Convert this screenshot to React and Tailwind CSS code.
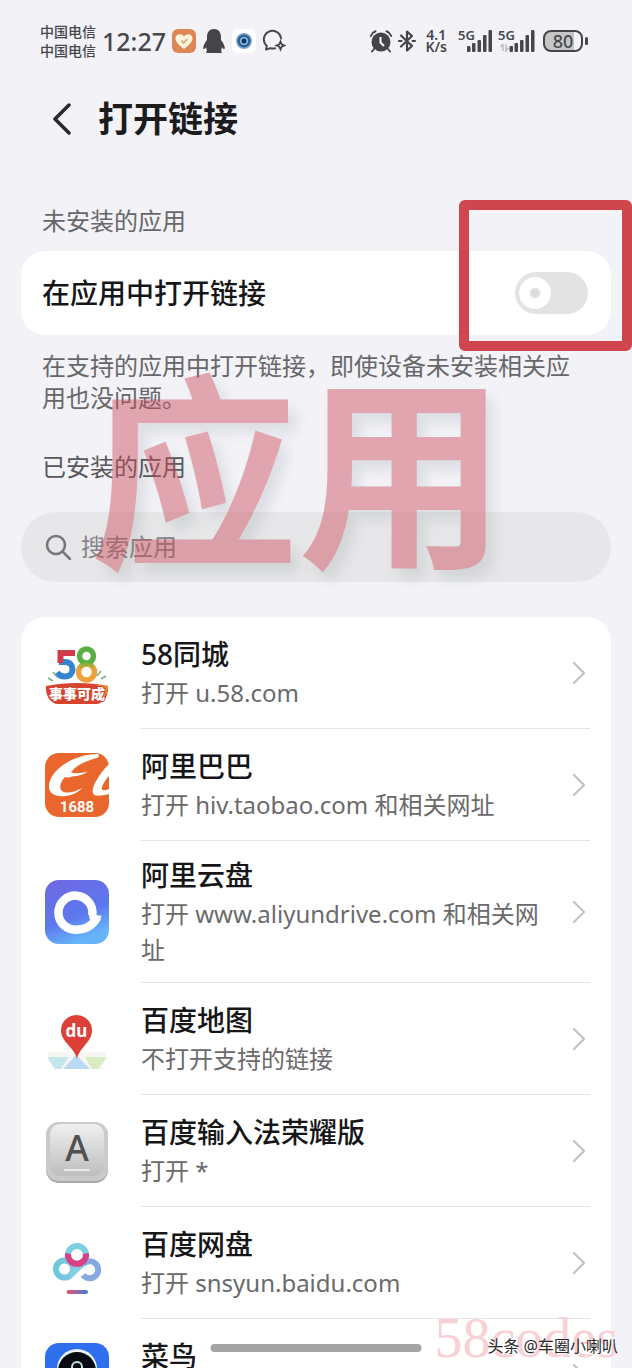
import React from "react";

function StatusBar() {
  return (
    <div className="mt-[21px] flex h-10 items-center justify-between pl-10 pr-11 text-[#47474b]">
      <div className="flex items-center">
        <div className="text-sm font-medium leading-[19px]">
          <div>中国电信</div>
          <div>中国电信</div>
        </div>
        <div className="ml-1.5 text-[25px] font-medium leading-10">12:27</div>
        <div className="ml-1.5 flex items-center gap-1.5">
          <svg className="size-6" viewBox="0 0 24 24">
            <rect width="24" height="24" rx="6" fill="#dd8755" />
            <path d="M12 20C7 16 3.5 13 3.5 9.2 3.5 4.8 9.5 3.7 12 7.400 14.500 3.7 20.500 4.800 20.500 9.200 20.500 13 17 16 12 20Z" fill="#fff3dc" />
            <path d="M9.500 11.500l2 2.500 4-4" fill="none" stroke="#d6a27c" strokeWidth="1.600" />
          </svg>
          <svg className="h-[26px] w-6" viewBox="0 0 24 26" fill="#444449">
            <path d="M12 1C7.500 1 5 4.500 5 9v3C3 14.500 1 18 1.200 20.500c.3 1 1.600.4 2.800-1.300.2 1.300.5 2.300 1 3.300-.5.8-.9 1.500-.5 2.500h15c.4-1 0-1.700-.5-2.500.5-1 .8-2 1-3.300 1.200 1.700 2.500 2.300 2.800 1.300C23 18 21 14.500 19 12V9c0-4.500-2.500-8-7-8Z" />
          </svg>
          <svg className="size-6" viewBox="0 0 24 24">
            <rect width="24" height="24" rx="6" fill="#fff" />
            <circle cx="12" cy="12" r="8" fill="#7fa8cc" />
            <circle cx="12" cy="12" r="6.500" fill="#2c5f92" />
            <circle cx="12" cy="12" r="4" fill="#8fc0e4" />
            <circle cx="12" cy="12" r="2.500" fill="#12355e" />
          </svg>
          <svg className="size-6" viewBox="0 0 24 24" fill="none" stroke="#47474b" strokeWidth="2">
            <path d="M13 19.200c-1.600.5-3.200.4-4.500-.1L4 20.500l.8-3.600A8.600 8.600 0 1 1 19 9.500" strokeLinejoin="round" strokeLinecap="round" />
            <path d="M18.500 12.500l1.200 2.800 2.800 1.200-2.800 1.200-1.200 2.800-1.200-2.800-2.800-1.200 2.800-1.200Z" strokeWidth="1.800" />
          </svg>
        </div>
      </div>
      <div className="flex items-center">
        <svg className="size-6" viewBox="0 0 24 24">
          <circle cx="12" cy="13" r="9.500" fill="#444449" />
          <path d="M1.800 7A8 8 0 0 1 6.500 2.200M22.200 7A8 8 0 0 0 17.500 2.200M5 20l-2 2.500M19 20l2 2.500" stroke="#444449" strokeWidth="2" strokeLinecap="round" fill="none" />
          <path d="M11.500 8v5.500l3.500 3.500" stroke="#fff" strokeWidth="2" fill="none" />
        </svg>
        <svg className="ml-1 h-6 w-5" viewBox="0 0 20 24" fill="none" stroke="#444449" strokeWidth="2.200">
          <path d="M4 6.500l11 10.500-5 4.500V2.500l5 4.500L4 17.500" strokeLinejoin="round" strokeLinecap="round" />
          <path d="M2 12h2.500M15.500 12H18" strokeLinecap="round" />
        </svg>
        <div className="ml-2 text-center text-sm font-semibold leading-3">
          <div>4.1</div>
          <div>K/s</div>
        </div>
        <svg className="ml-3 h-6 w-[34px] overflow-visible" viewBox="0 0 34 24" fill="#47474b">
          <text x="-1" y="11" fontSize="13" fontWeight="600">5G</text>
          <rect x="8" y="17" width="3.500" height="6" rx="1" />
          <rect x="13" y="14" width="3.500" height="9" rx="1" />
          <rect x="18.500" y="11" width="3.500" height="12" rx="1" />
          <rect x="24" y="6" width="3.500" height="17" rx="1" />
          <rect x="29.500" y="1" width="3.500" height="22" rx="1" />
        </svg>
        <svg className="ml-1.5 h-6 w-9 overflow-visible" viewBox="0 0 36 24" fill="#47474b">
          <text x="-1" y="11" fontSize="13" fontWeight="600">5G</text>
          <path d="M4 15v7M1.500 18L4 15M7 15v7l2.500-3" stroke="#bdbdc1" strokeWidth="1.500" fill="none" />
          <rect x="10.500" y="17" width="3.500" height="6" rx="1" />
          <rect x="15.500" y="14" width="3.500" height="9" rx="1" />
          <rect x="21" y="11" width="3.500" height="12" rx="1" />
          <rect x="26.500" y="6" width="3.500" height="17" rx="1" />
          <rect x="32" y="1" width="3.500" height="22" rx="1" />
        </svg>
        <div className="ml-2 flex items-center gap-0.5">
          <div className="flex h-[22px] w-10 items-center justify-center rounded-lg border-2 border-[#444449] bg-linear-to-r from-[#c6c6c9] from-80% to-[#f2f2f7] to-80% text-lg font-medium leading-none">
            80
          </div>
          <div className="h-2 w-[3px] rounded-sm bg-[#444449]" />
        </div>
      </div>
    </div>
  );
}

function Icon58() {
  return (
    <svg className="size-16" viewBox="0 0 64 64" fill="none">
      <path d="M14 21h6c10 0 10 14.500 0 14.500-4 0-6-1-8-4" stroke="#3285cf" strokeWidth="6" />
      <path d="M30 12H15.500v10" stroke="#d33a4c" strokeWidth="6" />
      <circle cx="41.500" cy="31" r="8" stroke="#eda13a" strokeWidth="5.500" />
      <circle cx="41.500" cy="15" r="7" stroke="#58b043" strokeWidth="5.500" />
      <path d="M35 26a9 9 0 0 1 13 0" stroke="#8fb33d" strokeWidth="3" />
      <path d="M3 37l5 3M8 31l4 5M56 30l-4 5M61 35l-5 3" stroke="#7fae8a" strokeWidth="1.500" />
      <path d="M1 45c20-4 42-4 62 0 1 10-5 18-12 18H13C6 63 0 55 1 45Z" fill="#d8432f" />
      <path d="M52 43l11 2c0 5-1 8-4 11Z" fill="#e98b35" />
      <text x="32" y="58" textAnchor="middle" fontSize="14" fontWeight="900" fill="#fff" stroke="#d8432f" strokeWidth="2" paintOrder="stroke">事事可成</text>
    </svg>
  );
}

function Icon1688() {
  return (
    <svg className="size-16" viewBox="0 0 64 64">
      <rect width="64" height="64" rx="14" fill="#e9662d" />
      <path d="M52 1C31 1 6 15 4 32c-1 9 7 12 17 11 7-1 13-4 16-8-7 4-17 7-21 2-2-3 0-9 4-13 3 1 5 .5 7-.5 6-.5 12-2 16-5-6 1.500-12 2.500-17 1 4-6 11-10 24-14 5-1 5-4 2-4.500Z" fill="#fff" />
      <path d="M64 11C55 20 46 34 48 40c1 4 8 3 16 1v-5c-5 2-8 2-7-2 1-3 4-8 7-11Z" fill="#fff" />
      <text x="32" y="59" textAnchor="middle" fontSize="15" fontWeight="700" fill="#fff" fontFamily="Roboto">1688</text>
    </svg>
  );
}

function IconDrive() {
  return (
    <svg className="size-16" viewBox="0 0 64 64">
      <defs>
        <linearGradient id="drive" x1="0" y1="0" x2="0.400" y2="1">
          <stop stopColor="#7067e2" />
          <stop offset="0.650" stopColor="#5d78ee" />
          <stop offset="1" stopColor="#66b4f8" />
        </linearGradient>
      </defs>
      <rect width="64" height="64" rx="14" fill="url(#drive)" />
      <path d="M47.200 35.500A17 17 0 1 0 32.500 49.500C41 49.500 47.500 46 52.500 37" fill="none" stroke="#fff" strokeWidth="8.500" />
      <path d="M43.500 33.500l13.500 2.500-6 8-6-4Z" fill="#fff" />
    </svg>
  );
}

function IconMap() {
  return (
    <svg className="size-16" viewBox="0 0 64 64">
      <path d="M2 45h60l-5 17H8Z" fill="#f7f6f2" />
      <path d="M2 50h22l-8 12H10Z" fill="#c6e6ee" />
      <path d="M31 48l14 14H18Z" fill="#b9dbf5" />
      <path d="M40 50h22l-9 12h-6Z" fill="#d7ecc0" />
      <path d="M32 52C30 41 16 35 16 23.500a15.500 15.500 0 0 1 31 0C47 35 34 41 32 52Z" fill="#dc4038" />
      <text x="31.500" y="30" textAnchor="middle" fontSize="17" fontWeight="700" fill="#fff">du</text>
    </svg>
  );
}

function IconKeyboard() {
  return (
    <svg className="size-16" viewBox="0 0 64 64">
      <defs>
        <linearGradient id="key" x1="0" y1="0" x2="0" y2="1">
          <stop stopColor="#f0f0f0" />
          <stop offset="1" stopColor="#bdbdbd" />
        </linearGradient>
      </defs>
      <rect x="1" y="4" width="62" height="60" rx="13" fill="#a8a8a8" />
      <rect x="1" y="3" width="62" height="59" rx="13" fill="#cacaca" />
      <rect x="5" y="5" width="54" height="52" rx="10" fill="url(#key)" />
      <text x="32" y="42" textAnchor="middle" fontSize="36" fontWeight="500" fill="#505050">A</text>
      <path d="M19 51h26" stroke="#f5f5f5" strokeWidth="1.500" />
    </svg>
  );
}

function IconNetdisk() {
  return (
    <svg className="size-16" viewBox="0 0 64 64" fill="none" strokeWidth="6">
      <defs>
        <linearGradient id="disk" x1="0" x2="1">
          <stop stopColor="#69c9d8" />
          <stop offset="1" stopColor="#85c4e8" />
        </linearGradient>
        <linearGradient id="bar" x1="0" x2="1">
          <stop stopColor="#eb5466" />
          <stop offset="0.500" stopColor="#9b63a0" />
          <stop offset="1" stopColor="#3c83d6" />
        </linearGradient>
      </defs>
      <path d="M38 33.500A8.500 8.500 0 1 1 38 44" stroke="#86a9df" />
      <circle cx="19.500" cy="38" r="8.500" stroke="url(#disk)" />
      <path d="M24.500 44.500C29 42 34 35 39 32" stroke="#83d0e2" />
      <circle cx="32" cy="24" r="9" stroke="#7bcfe0" />
      <path d="M23.100 22.500a9 9 0 1 0 17.800 0" stroke="#d93f83" />
      <rect x="21.500" y="59" width="21.500" height="4" rx="2" fill="url(#bar)" />
    </svg>
  );
}

function IconCainiao() {
  return (
    <svg className="size-16" viewBox="0 0 64 64">
      <rect width="64" height="64" rx="14" fill="#2f6fee" />
      <circle cx="32" cy="26" r="20" fill="#e8f3ff" />
      <circle cx="32" cy="28" r="19" fill="#080b12" />
      <circle cx="32" cy="24" r="5" fill="none" stroke="#bfe3dc" strokeWidth="2" />
    </svg>
  );
}

const apps = [
  { name: "58同城", detail: "打开 u.58.com", Icon: Icon58 },
  { name: "阿里巴巴", detail: "打开 hiv.taobao.com 和相关网址", Icon: Icon1688 },
  { name: "阿里云盘", detail: "打开 www.aliyundrive.com 和相关网址", Icon: IconDrive },
  { name: "百度地图", detail: "不打开支持的链接", Icon: IconMap },
  { name: "百度输入法荣耀版", detail: "打开 *", Icon: IconKeyboard },
  { name: "百度网盘", detail: "打开 snsyun.baidu.com", Icon: IconNetdisk },
  { name: "菜鸟", detail: "", Icon: IconCainiao },
];

function AppRow({ name, detail, Icon }) {
  return (
    <li>
      <a href="#" className="flex items-center gap-8 pl-6 pr-[21px]">
        <span className="size-16 shrink-0">
          <Icon />
        </span>
        <span className="flex min-h-28 min-w-0 flex-1 items-center border-b border-[#e4e4e6] py-3.5">
          <span className="min-w-0 flex-1 pr-7">
            <span className="block text-[28px] font-medium leading-[41px] text-[#161618]">{name}</span>
            <span className="block min-h-9 text-2xl leading-9 text-[#6a6a6c]">{detail}</span>
          </span>
          <svg className="mr-0.5 h-6 w-4 shrink-0" viewBox="0 0 16 24" fill="none" stroke="#c3c3c5" strokeWidth="2.200" strokeLinecap="round" strokeLinejoin="round">
            <path d="M2 2l10 10L2 22" />
          </svg>
        </span>
      </a>
    </li>
  );
}

export default function App() {
  return (
    <div className="relative flow-root h-screen overflow-hidden bg-[#f2f2f7] font-['Noto_Sans','Noto_Sans_CJK_SC',sans-serif]">
      <StatusBar />
      <header className="mt-[30px] flex h-14 items-center gap-[18px] pl-11">
        <button type="button" aria-label="返回" className="flex w-9 justify-center">
          <svg className="h-8 w-5" viewBox="0 0 20 32" fill="none" stroke="#29292c" strokeWidth="3.500" strokeLinecap="round" strokeLinejoin="round">
            <path d="M17 2L3 16l14 14" />
          </svg>
        </button>
        <h1 className="text-[35px] font-bold leading-[56px] text-[#1c1c1e]">打开链接</h1>
      </header>

      <main className="px-[21px]">
        <h2 className="mb-3 mt-14 px-[21px] text-2xl leading-9 text-[#67676a]">未安装的应用</h2>
        <div className="relative">
          <label className="flex h-[84px] items-center justify-between rounded-3xl bg-white pl-[21px] pr-[23px] text-[28px] font-medium text-[#161618]">
            在应用中打开链接
            <input
              type="checkbox"
              role="switch"
              className="flex h-[42px] w-[73px] appearance-none items-center rounded-full bg-[#e3e3e4] px-1 before:size-8 before:rounded-full before:bg-white before:bg-[radial-gradient(circle,#dcdcdd_4px,transparent_6px)] checked:justify-end checked:bg-blue-500"
            />
          </label>
          <div className="pointer-events-none absolute -bottom-4 -right-[21px] -top-[51px] w-[173px] rounded-md border-10 border-[#cf464f]" />
        </div>
        <p className="mt-[15px] px-[21px] text-2xl leading-8 text-[#67676a]">
          在支持的应用中打开链接，即使设备未安装相关应用也没问题。
        </p>
        <h2 className="mt-[35px] px-[21px] text-2xl leading-9 text-[#58585b]">已安装的应用</h2>
        <label className="mt-[27px] flex h-[70px] items-center gap-2.5 rounded-full bg-[#e7e7e9] pl-6 pr-6">
          <svg className="size-[26px] shrink-0" viewBox="0 0 26 26" fill="none" stroke="#77777a" strokeWidth="2.600" strokeLinecap="round">
            <circle cx="11" cy="11" r="9" />
            <path d="M18 18l7 7" />
          </svg>
          <input
            type="text"
            aria-label="搜索应用"
            placeholder="搜索应用"
            className="min-w-0 flex-1 bg-transparent text-2xl text-[#333] outline-none placeholder:text-[#858587]"
          />
        </label>

        <ul className="mt-[35px] rounded-3xl bg-white">
          {apps.map((app) => (
            <AppRow key={app.name} {...app} />
          ))}
        </ul>
      </main>

      <div className="pointer-events-none absolute left-[90px] top-[368px] whitespace-nowrap text-[208px] font-bold leading-[208px] text-[#cc4a58] opacity-45 [text-shadow:8px_10px_12px_rgba(90,105,110,0.3)]">
        应用
      </div>
      <div className="pointer-events-none absolute bottom-4 left-1/2 h-2 w-[211px] -translate-x-1/2 rounded-full bg-[#a4a4a5]" />
      <div className="pointer-events-none absolute bottom-0 right-3.5 whitespace-nowrap font-['Liberation_Serif',serif] text-[56px] leading-[60px] text-[#f9d0d5]">
        58codes
      </div>
      <div className="pointer-events-none absolute bottom-2.5 right-3.5 whitespace-nowrap text-base leading-6 text-[#29292b] [text-shadow:1px_1px_1px_#fff]">
        头条 @车圈小喇叭
      </div>
    </div>
  );
}
